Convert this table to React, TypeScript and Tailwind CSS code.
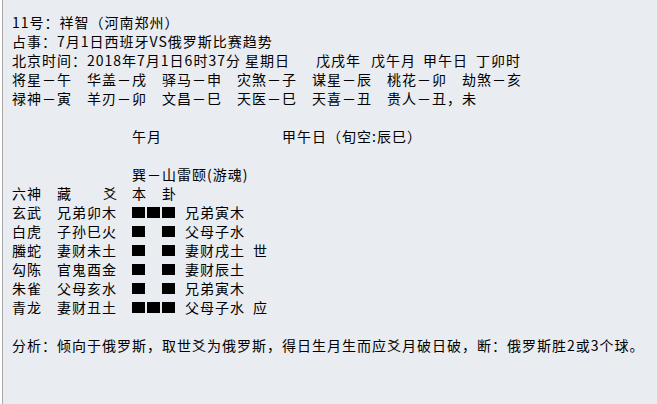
import React from 'react';

const Yang = () => (
  <div className="flex gap-[2px] items-center w-[53px] h-[19px]">
    <span className="w-[13px] h-[11px] bg-black" />
    <span className="w-[13px] h-[11px] bg-black" />
    <span className="w-[13px] h-[11px] bg-black" />
  </div>
);

const Yin = () => (
  <div className="flex gap-[17px] items-center w-[53px] h-[19px]">
    <span className="w-[13px] h-[11px] bg-black" />
    <span className="w-[13px] h-[11px] bg-black" />
  </div>
);

const yao = [
  { god: '玄武', hidden: '兄弟卯木', yang: true, main: '兄弟寅木', mark: '' },
  { god: '白虎', hidden: '子孙巳火', yang: false, main: '父母子水', mark: '' },
  { god: '螣蛇', hidden: '妻财未土', yang: false, main: '妻财戌土', mark: '世' },
  { god: '勾陈', hidden: '官鬼酉金', yang: false, main: '妻财辰土', mark: '' },
  { god: '朱雀', hidden: '父母亥水', yang: false, main: '兄弟寅木', mark: '' },
  { god: '青龙', hidden: '妻财丑土', yang: true, main: '父母子水', mark: '应' },
];

const shensha1 = ['将星－午', '华盖－戌', '驿马－申', '灾煞－子', '谋星－辰', '桃花－卯', '劫煞－亥'];
const shensha2 = ['禄神－寅', '羊刃－卯', '文昌－巳', '天医－巳', '天喜－丑', '贵人－丑，未'];

export default function App() {
  return (
    <div className="h-[404px] w-full bg-white pl-[2px] overflow-hidden">
      <div className="h-full border-l border-[#a8a8a8] bg-[#e9ecf0] pl-[9px] pt-[13px] text-black text-[14px] leading-[19px] tracking-[1px] font-['Noto_Sans_CJK_SC',sans-serif] whitespace-nowrap">
        {/* header */}
        <div>11号：祥智（河南郑州）</div>
        <div>占事：7月1日西班牙VS俄罗斯比赛趋势</div>
        <div className="flex">
          <span className="w-[304px]">北京时间：2018年7月1日6时37分 星期日</span>
          <span className="w-[55px]">戊戌年</span>
          <span className="w-[52px]">戊午月</span>
          <span className="w-[53px]">甲午日</span>
          <span>丁卯时</span>
        </div>
        <div className="flex">
          {shensha1.map((s) => (
            <span key={s} className="w-[75px]">{s}</span>
          ))}
        </div>
        <div className="flex">
          {shensha2.map((s) => (
            <span key={s} className="w-[75px]">{s}</span>
          ))}
        </div>
        <div className="h-[19px]" />

        {/* month / day */}
        <div className="flex">
          <span className="w-[120px]" />
          <span className="w-[150px]">午月</span>
          <span>甲午日（旬空:辰巳）</span>
        </div>
        <div className="h-[19px]" />

        {/* hexagram */}
        <div className="flex">
          <span className="w-[120px]" />
          <span>巽－山雷颐(游魂)</span>
        </div>
        <div className="flex">
          <span className="w-[45px]">六神</span>
          <span className="w-[46px]">藏</span>
          <span className="w-[29px]">爻</span>
          <span className="w-[30px]">本</span>
          <span>卦</span>
        </div>
        {yao.map((y) => (
          <div key={y.god} className="flex items-center">
            <span className="w-[45px]">{y.god}</span>
            <span className="w-[75px]">{y.hidden}</span>
            {y.yang ? <Yang /> : <Yin />}
            <span className="w-[68px]">{y.main}</span>
            <span>{y.mark}</span>
          </div>
        ))}
        <div className="h-[19px]" />

        <div>分析：倾向于俄罗斯，取世爻为俄罗斯，得日生月生而应爻月破日破，断：俄罗斯胜2或3个球。</div>
      </div>
    </div>
  );
}
